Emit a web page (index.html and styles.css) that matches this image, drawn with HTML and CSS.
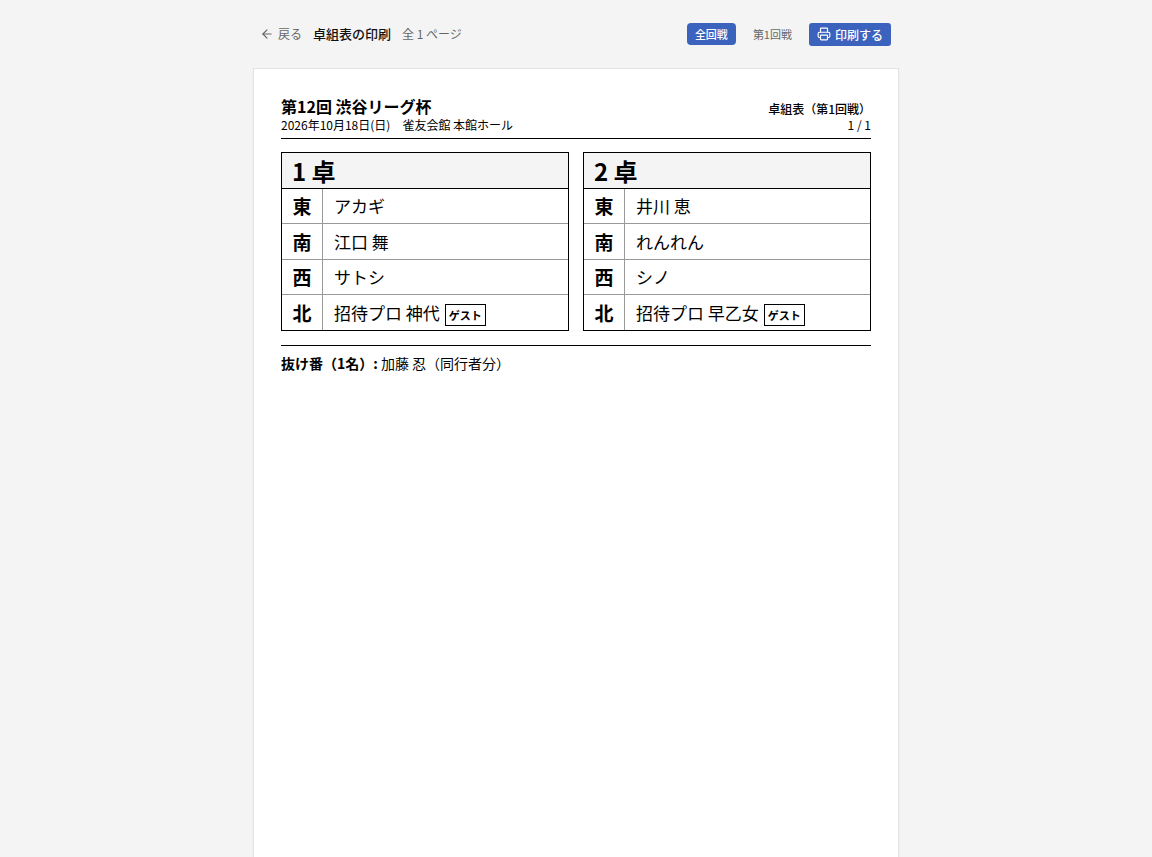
FILE: index.html
```html
<!DOCTYPE html>
<html lang="ja">
  <head>
    <meta charset="UTF-8" />
    <meta name="viewport" content="width=device-width, initial-scale=1.0" />
    <title>卓組表の印刷</title>
    <link rel="stylesheet" href="styles.css">
  </head>
  <body>
    <div class="container">
      <header class="toolbar">
        <a class="toolbar__back" href="#">
          <svg class="icon" viewBox="0 0 24 24" aria-hidden="true">
            <path d="m12 19-7-7 7-7" />
            <path d="M19 12H5" />
          </svg>
          戻る
        </a>
        <h1 class="toolbar__title">卓組表の印刷</h1>
        <span class="toolbar__count">全 1 ページ</span>
        <div class="toolbar__actions">
          <button class="btn btn--active" type="button">全回戦</button>
          <button class="btn" type="button">第1回戦</button>
          <button class="btn btn--print" type="button">
            <svg class="icon" viewBox="0 0 24 24" aria-hidden="true">
              <path d="M6 18H4a2 2 0 0 1-2-2v-5a2 2 0 0 1 2-2h16a2 2 0 0 1 2 2v5a2 2 0 0 1-2 2h-2" />
              <path d="M6 9V3a1 1 0 0 1 1-1h10a1 1 0 0 1 1 1v6" />
              <rect x="6" y="14" width="12" height="8" rx="1" />
            </svg>
            印刷する
          </button>
        </div>
      </header>
      <main class="sheet">
        <div class="sheet__header">
          <div>
            <h2 class="sheet__title">第12回 渋谷リーグ杯</h2>
            <p class="sheet__meta">2026年10月18日(日)　雀友会館 本館ホール</p>
          </div>
          <div class="sheet__side">
            <p class="sheet__round">卓組表（第1回戦）</p>
            <p class="sheet__meta">1 / 1</p>
          </div>
        </div>
        <div class="tables">
          <table class="seats">
            <thead>
              <tr><th class="seats__head" colspan="2">1 卓</th></tr>
            </thead>
            <tbody>
              <tr><th class="seats__wind">東</th><td class="seats__name">アカギ</td></tr>
              <tr><th class="seats__wind">南</th><td class="seats__name">江口 舞</td></tr>
              <tr><th class="seats__wind">西</th><td class="seats__name">サトシ</td></tr>
              <tr><th class="seats__wind">北</th><td class="seats__name">招待プロ 神代<span class="badge">ゲスト</span></td></tr>
            </tbody>
          </table>
          <table class="seats">
            <thead>
              <tr><th class="seats__head" colspan="2">2 卓</th></tr>
            </thead>
            <tbody>
              <tr><th class="seats__wind">東</th><td class="seats__name">井川 恵</td></tr>
              <tr><th class="seats__wind">南</th><td class="seats__name">れんれん</td></tr>
              <tr><th class="seats__wind">西</th><td class="seats__name">シノ</td></tr>
              <tr><th class="seats__wind">北</th><td class="seats__name">招待プロ 早乙女<span class="badge">ゲスト</span></td></tr>
            </tbody>
          </table>
        </div>
        <p class="bench"><strong>抜け番（1名）:</strong> 加藤 忍（同行者分）</p>
      </main>
    </div>
  </body>
</html>
```

FILE: styles.css
```css
* {
  box-sizing: border-box;
  margin: 0;
  padding: 0;
}
body {
  background: #f4f4f4;
  color: #000;
  font-family: "Noto Sans CJK JP", sans-serif;
  font-size: 12px;
  line-height: 18px;
}
.container {
  max-width: 646px;
  margin: 0 auto;
}
.icon {
  flex: none;
  width: 14px;
  height: 14px;
  fill: none;
  stroke: currentColor;
  stroke-width: 2;
  stroke-linecap: round;
  stroke-linejoin: round;
}

/* toolbar */
.toolbar {
  display: flex;
  align-items: center;
  flex-wrap: wrap;
  gap: 11px;
  min-height: 68px;
  padding: 0 8px 0 7px;
}
.toolbar__back {
  display: flex;
  align-items: center;
  gap: 4px;
  color: #666;
  text-decoration: none;
}
.toolbar__title {
  color: #111;
  font-size: 13px;
  font-weight: 500;
}
.toolbar__count {
  color: #666;
}
.toolbar__actions {
  display: flex;
  align-items: center;
  gap: 9px;
  margin-left: auto;
}
.btn {
  display: flex;
  align-items: center;
  gap: 4px;
  height: 22px;
  padding: 0 8px;
  border: 0;
  border-radius: 4px;
  background: transparent;
  color: #666;
  font-family: inherit;
  font-size: 11px;
  cursor: pointer;
}
.btn--active,
.btn--print {
  background: #3b62bd;
  color: #fff;
  font-weight: 500;
}
.btn--print {
  height: 23px;
  border-radius: 3px;
  font-size: 12px;
}

/* printed sheet */
.sheet {
  min-height: 914px;
  padding: 27px;
  border: 1px solid #e2e2e2;
  background: #fff;
  box-shadow: 0 1px 2px rgba(0, 0, 0, 0.05);
}
.sheet__header {
  display: flex;
  justify-content: space-between;
  align-items: flex-end;
  padding-bottom: 5px;
  border-bottom: 1px solid #000;
}
.sheet__title {
  font-size: 16px;
  font-weight: 700;
  line-height: 21px;
}
.sheet__meta {
  line-height: 16px;
}
.sheet__side {
  text-align: right;
}
.sheet__round {
  font-weight: 500;
  line-height: 16px;
}
.tables {
  display: grid;
  grid-template-columns: 1fr 1fr;
  gap: 14px;
  margin: 13px 0 14px;
}
.seats {
  width: 100%;
  border: 1px solid #000;
  border-spacing: 0;
}
.seats__head {
  height: 36px;
  padding: 0 10px;
  border-bottom: 1px solid #000;
  background: #f4f4f4;
  font-size: 24px;
  line-height: 35px;
  text-align: left;
}
.seats__wind {
  width: 41px;
  height: 35px;
  border-right: 1px solid #999;
  border-bottom: 1px solid #999;
  font-size: 19px;
  line-height: 28px;
}
.seats__name {
  padding: 0 11px;
  border-bottom: 1px solid #999;
  font-size: 17px;
  line-height: 28px;
}
.seats tr:nth-child(2) .seats__wind {
  height: 36px;
}
.seats tr:last-child .seats__wind,
.seats tr:last-child .seats__name {
  border-bottom: 0;
}
.badge {
  display: inline-block;
  margin-left: 5px;
  padding: 0 3px;
  border: 1px solid #000;
  font-size: 11px;
  font-weight: 700;
  line-height: 20px;
}
.bench {
  padding-top: 7px;
  border-top: 1px solid #000;
  font-size: 14px;
  line-height: 20px;
}
```
